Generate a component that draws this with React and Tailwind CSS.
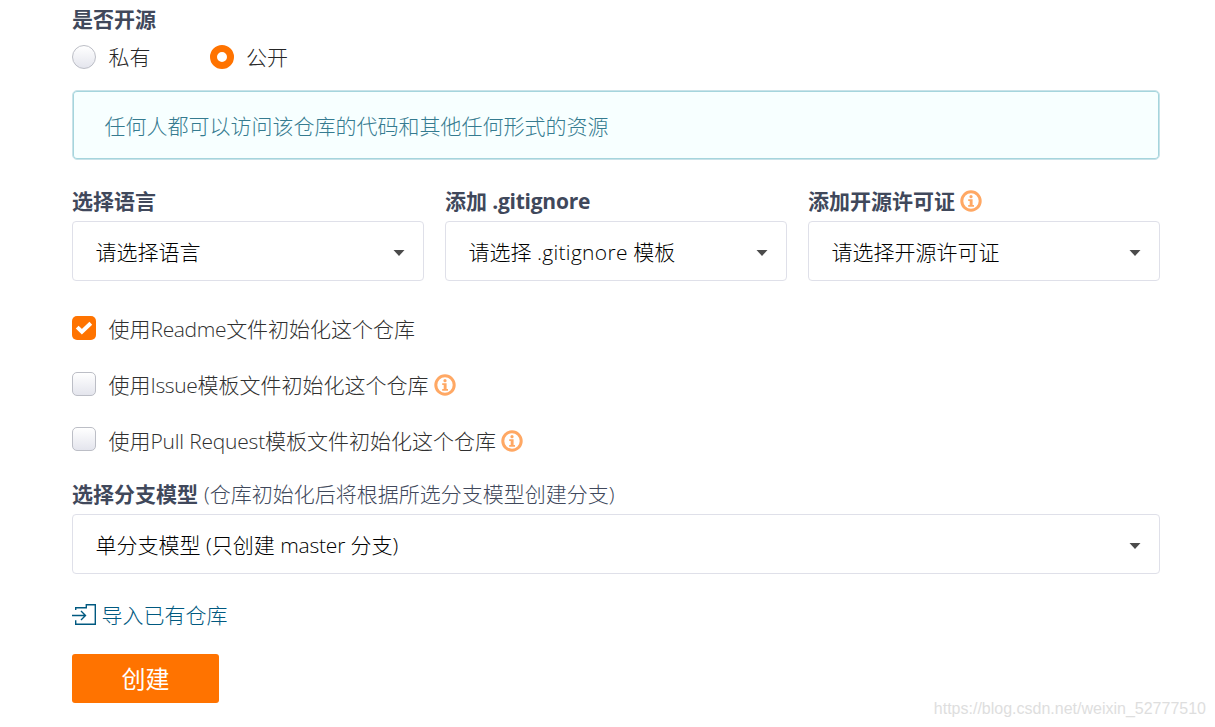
import { useState } from 'react';

function InfoIcon() {
  return (
    <svg className="ml-[5px] h-[22px] w-[22px] shrink-0" viewBox="0 0 22 22" fill="none">
      <circle cx="11" cy="11" r="9.2" stroke="#ffa864" strokeWidth="3" />
      <circle cx="11" cy="6.7" r="1.6" fill="#ffa864" />
      <path d="M8.2 9.2h4.4v5.8h1.4v1.7H8.2V15h1.5v-4.1H8.2z" fill="#ffa864" />
    </svg>
  );
}

function ImportIcon() {
  return (
    <svg className="mr-[5.5px] h-6 w-6 shrink-0" viewBox="0 0 24 24" fill="none" stroke="#005980" strokeWidth="1.4">
      <path d="M3.7 7V4.7h10.6V1.7h9v19.6H3.7v-4" />
      <path d="M0 12.5h13M9 8l4.5 4.5L9 17" />
    </svg>
  );
}

function Label({ children }) {
  return (
    <div className="flex h-[30px] items-center pb-0.5 font-bold whitespace-nowrap text-[#40485b]">{children}</div>
  );
}

function Select({ children }) {
  return (
    <button
      type="button"
      className="mt-1 flex h-[60px] w-full items-center justify-between rounded-[4px] border border-[#dfe0e9] bg-white pt-0.5 pr-[18px] pl-[22.5px] text-black"
    >
      <span className="whitespace-nowrap">{children}</span>
      <svg className="mt-0.5 h-1.5 w-3" viewBox="0 0 12 6" fill="#4b4b4b">
        <path d="M0.5 0h11L6 6z" />
      </svg>
    </button>
  );
}

function Radio({ checked, onClick, children }) {
  return (
    <button type="button" onClick={onClick} className="flex h-6 items-center text-[#262626]">
      {checked ? (
        <span className="h-6 w-6 rounded-full border-[7px] border-[#ff7300] bg-white" />
      ) : (
        <span className="h-6 w-6 rounded-full border border-[#bcbec6] bg-linear-to-b from-white to-[#e4e5ed]" />
      )}
      <span className="ml-[12.5px]">{children}</span>
    </button>
  );
}

function Checkbox({ checked, onClick, children }) {
  return (
    <div className="flex items-start text-[#303030]">
      <button type="button" onClick={onClick} className="h-6 w-6 shrink-0">
        {checked ? (
          <span className="flex h-6 w-6 items-center justify-center rounded-[5px] bg-[#ff7300]">
            <svg className="h-6 w-6" viewBox="0 0 24 24" fill="none" stroke="#fff" strokeWidth="4">
              <path d="M5.2 11.1l4.7 4.6 8.9-8.4" />
            </svg>
          </span>
        ) : (
          <span className="block h-6 w-6 rounded-[5px] border border-[#bcbec6] bg-linear-to-b from-white to-[#e4e5ed]" />
        )}
      </button>
      <span className="ml-[12.5px] flex h-[26px] items-center whitespace-nowrap">{children}</span>
    </div>
  );
}

export default function App() {
  const [isPublic, setIsPublic] = useState(true);
  const [init, setInit] = useState({ readme: true, issue: false, pull: false });
  const toggle = (key) => setInit({ ...init, [key]: !init[key] });

  return (
    <div className="relative h-[727px] overflow-hidden bg-white pt-[5px] pr-[55px] pl-[72px] font-['Open_Sans','Noto_Sans_CJK_SC',sans-serif] text-[21px] leading-[30px] font-light">
      <Label>是否开源</Label>
      <div className="mt-2.5 flex gap-[59px]">
        <Radio checked={!isPublic} onClick={() => setIsPublic(false)}>私有</Radio>
        <Radio checked={isPublic} onClick={() => setIsPublic(true)}>公开</Radio>
      </div>

      <div className="mt-[21px] flex h-[70px] items-center rounded-[5px] border border-[#c9e2e8] bg-[#f7ffff] pt-0.5 pl-[31.5px] text-[#357b90] shadow-[inset_0_0_0_1px_#a5d5dd]">
        任何人都可以访问该仓库的代码和其他任何形式的资源
      </div>

      <div className="mt-[27px] flex gap-[21px]">
        <div className="w-[352px]">
          <Label>选择语言</Label>
          <Select>请选择语言</Select>
        </div>
        <div className="w-[342px]">
          <Label><span className="tracking-[-0.25px]"><span className="tracking-normal">添加</span> .gitignore</span></Label>
          <Select>请选择 <span className="font-[350] tracking-[0.3px]">.gitignore</span> 模板</Select>
        </div>
        <div className="w-[352px]">
          <Label>添加开源许可证<InfoIcon /></Label>
          <Select>请选择开源许可证</Select>
        </div>
      </div>

      <div className="mt-[35px] mb-[28px] flex flex-col gap-[30px]">
        <Checkbox checked={init.readme} onClick={() => toggle('readme')}>
          使用<span className="font-[350] tracking-[-0.35px]">Readme</span>文件初始化这个仓库
        </Checkbox>
        <Checkbox checked={init.issue} onClick={() => toggle('issue')}>
          使用<span className="font-[350] tracking-[-0.35px]">Issue</span>模板文件初始化这个仓库<InfoIcon />
        </Checkbox>
        <div className="-mt-px [&>div>span]:h-7">
          <Checkbox checked={init.pull} onClick={() => toggle('pull')}>
            使用<span className="font-[350] tracking-[-0.2px]">Pull Request</span>模板文件初始化这个仓库<InfoIcon />
          </Checkbox>
        </div>
      </div>

      <div className="-mt-[3px]">
        <Label>
          选择分支模型
          <span className="ml-1.5 font-light">(仓库初始化后将根据所选分支模型创建分支)</span>
        </Label>
      </div>
      <Select>单分支模型 (只创建 <span className="font-[350] tracking-[-0.2px]">master</span> 分支)</Select>

      <a className="mt-[26px] flex h-[30px] items-center text-[#005980]" href="#import">
        <ImportIcon />
        导入已有仓库
      </a>
      <button type="button" className="mt-6 h-[49px] w-[147px] rounded-[3px] bg-[#ff7300] text-2xl font-normal text-white">
        创建
      </button>

      <div className="absolute right-[9px] bottom-[8px] font-['Liberation_Sans',sans-serif] text-base leading-5 font-normal text-[#dedede]">
        https://blog.csdn.net/weixin_52777510
      </div>
    </div>
  );
}
